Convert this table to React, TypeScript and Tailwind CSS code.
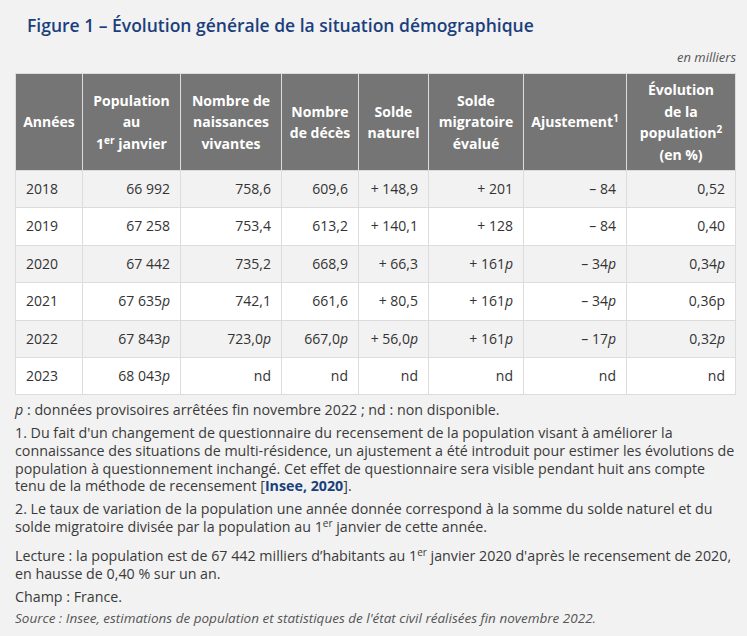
import React from "react";

type Row = { year: string; cells: [string, boolean][] };

const rows: Row[] = [
  { year: "2018", cells: [["66 992", false], ["758,6", false], ["609,6", false], ["+ 148,9", false], ["+ 201", false], ["– 84", false], ["0,52", false]] },
  { year: "2019", cells: [["67 258", false], ["753,4", false], ["613,2", false], ["+ 140,1", false], ["+ 128", false], ["– 84", false], ["0,40", false]] },
  { year: "2020", cells: [["67 442", false], ["735,2", false], ["668,9", false], ["+ 66,3", false], ["+ 161", true], ["– 34", true], ["0,34", true]] },
  { year: "2021", cells: [["67 635", true], ["742,1", false], ["661,6", false], ["+ 80,5", false], ["+ 161", true], ["– 34", true], ["0,36p", false]] },
  { year: "2022", cells: [["67 843", true], ["723,0", true], ["667,0", true], ["+ 56,0", true], ["+ 161", true], ["– 17", true], ["0,32", true]] },
  { year: "2023", cells: [["68 043", true], ["nd", false], ["nd", false], ["nd", false], ["nd", false], ["nd", false], ["nd", false]] },
];

const widths = ["w-[67px]", "w-[98px]", "w-[101px]", "w-[77px]", "w-[70px]", "w-[95px]", "w-[103px]", "w-[109px]"];

function Sup({ children }: { children: React.ReactNode }) {
  return <sup className="text-[10px]">{children}</sup>;
}

export default function App() {
  return (
    <div className="w-[747px] h-[636px] bg-[#f2f2f2] text-[#333] px-[15px] pt-[12px] font-['Open_Sans',sans-serif] overflow-hidden">
      <h1 className="text-[17.5px] leading-[26px] font-semibold text-[#1b3f7c] ml-[12px]">
        Figure 1 – Évolution générale de la situation démographique
      </h1>
      <p className="w-[721px] text-right text-[13px] leading-[18px] italic text-[#555] mt-[10px]">en milliers</p>

      <table className="table-fixed border-collapse w-[721px] mt-[7px] text-[14px] border border-[#dcdcdc]">
        <colgroup>
          {widths.map((w, i) => (
            <col key={i} className={w} />
          ))}
        </colgroup>
        <thead>
          <tr className="bg-[#757575] text-white font-bold leading-[21.5px]">
            <th className="border border-[#dcdcdc] py-[5px] px-1">Années</th>
            <th className="border border-[#dcdcdc] py-[5px] px-1">
              Population
              <br />
              au
              <br />1<Sup>er</Sup> janvier
            </th>
            <th className="border border-[#dcdcdc] py-[5px] px-1">
              Nombre de
              <br />
              naissances
              <br />
              vivantes
            </th>
            <th className="border border-[#dcdcdc] py-[5px] px-1">
              Nombre
              <br />
              de décès
            </th>
            <th className="border border-[#dcdcdc] py-[5px] px-1">
              Solde
              <br />
              naturel
            </th>
            <th className="border border-[#dcdcdc] py-[5px] px-1">
              Solde
              <br />
              migratoire
              <br />
              évalué
            </th>
            <th className="border border-[#dcdcdc] py-[5px] px-1">
              Ajustement<Sup>1</Sup>
            </th>
            <th className="border border-[#dcdcdc] py-[5px] px-1">
              Évolution
              <br />
              de la
              <br />
              population<Sup>2</Sup>
              <br />
              (en %)
            </th>
          </tr>
        </thead>
        <tbody>
          {rows.map((r, i) => (
            <tr key={r.year} className={i % 2 === 0 ? "bg-[#f2f2f2]" : "bg-white"}>
              <td className="border border-[#dcdcdc] py-2 pl-[10px] leading-[20.4px]">{r.year}</td>
              {r.cells.map(([v, p], j) => (
                <td key={j} className="border border-[#dcdcdc] py-2 pr-[10px] text-right leading-[20.4px] whitespace-nowrap">
                  {v}
                  {p && <i>p</i>}
                </td>
              ))}
            </tr>
          ))}
        </tbody>
      </table>

      <div className="w-[721px] text-[14.25px] leading-[17.7px] text-[#3a3a3a] mt-[6px] flex flex-col gap-[5px]">
        <p>
          <i>p</i> : données provisoires arrêtées fin novembre 2022 ; nd : non disponible.
        </p>
        <p>
          1. Du fait d'un changement de questionnaire du recensement de la population visant à améliorer la connaissance des
          situations de multi-résidence, un ajustement a été introduit pour estimer les évolutions de population à
          questionnement inchangé. Cet effet de questionnaire sera visible pendant huit ans compte tenu de la méthode de
          recensement [<span className="font-bold text-[#1b3f7c]">Insee, 2020</span>].
        </p>
        <p>
          2. Le taux de variation de la population une année donnée correspond à la somme du solde naturel et du solde
          migratoire divisée par la population au 1<Sup>er</Sup> janvier de cette année.
        </p>
        <p className="mt-[7px]">
          Lecture : la population est de 67 442 milliers d’habitants au 1<Sup>er</Sup> janvier 2020 d'après le recensement de
          2020, en hausse de 0,40 % sur un an.
        </p>
        <p>Champ : France.</p>
        <p className="italic text-[13.5px] text-[#555]">
          Source : Insee, estimations de population et statistiques de l'état civil réalisées fin novembre 2022.
        </p>
      </div>
    </div>
  );
}
